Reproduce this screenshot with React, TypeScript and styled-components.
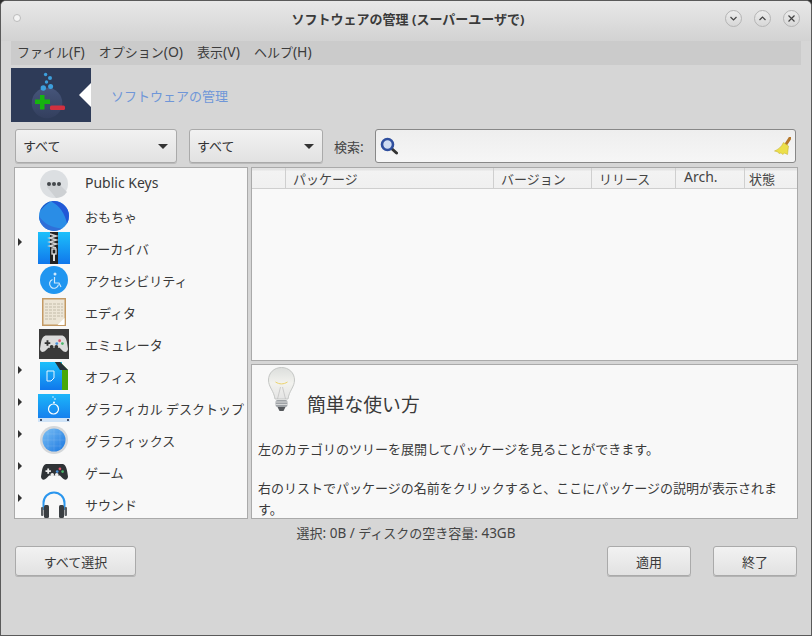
import * as React from 'react';
import styled, { createGlobalStyle } from 'styled-components';

const GlobalStyle = createGlobalStyle`
    html, body {
        margin: 0;
        padding: 0;
        background: #2e2e2e;
    }
    body {
        font-family: "Noto Sans", "Noto Sans CJK JP", sans-serif;
        font-size: 13px;
        color: #333;
    }
`;

// latin text runs a bit larger than the kana next to it
const Latin = styled.span`
    font-size: 14px;
`;

const StatusLatin = styled.span`
    font-size: 13.500px;
`;

const Window = styled.div`
    width: 812px;
    height: 636px;
    box-sizing: border-box;
    border: 1px solid #5a5a5a;
    border-radius: 6px 6px 0 0;
    background: #d6d6d6;
    display: flex;
    flex-direction: column;
    overflow: hidden;
`;

const TitleBar = styled.div`
    height: 40px;
    flex: none;
    display: flex;
    align-items: center;
    padding: 0 11px 6px 12px;
    box-sizing: border-box;
    background: linear-gradient(#e8e8e8, #d2d2d2);
`;

const Dot = styled.div`
    width: 6px;
    height: 6px;
    border-radius: 50%;
    background: #f4f4f4;
    border: 1px solid #bbb;
`;

const Title = styled.div`
    flex: 1;
    text-align: center;
    font-weight: 700;
    font-size: 13px;
    color: #3a3a3a;
    padding-left: 70px;
`;

const WinButtons = styled.div`
    display: flex;
    gap: 12px;
`;

const WinButton = styled.div`
    width: 17px;
    height: 17px;
    box-sizing: border-box;
    border-radius: 50%;
    border: 1px solid #b4b4b4;
    background: linear-gradient(#ececec, #d8d8d8);
    display: flex;
    align-items: center;
    justify-content: center;
`;

const MenuBar = styled.div`
    height: 24px;
    flex: none;
    margin: 0 10px;
    padding: 0 6px 3px;
    box-sizing: border-box;
    display: flex;
    align-items: center;
    gap: 14px;
    background: #cbcbcb;
    color: #3c3c3c;
`;

const Banner = styled.div`
    flex: none;
    height: 54px;
    margin: 3px 10px 0;
    display: flex;
    align-items: center;
    gap: 20px;
`;

const BannerLogo = styled.div`
    width: 80px;
    height: 54px;
    background: #2e3b58;
    position: relative;
`;

const BannerNotch = styled.div`
    position: absolute;
    right: 0;
    top: 15px;
    border-style: solid;
    border-width: 12px 12px 12px 0;
    border-color: transparent #fff transparent transparent;
`;

const BannerText = styled.div`
    color: #6f96d8;
`;

const FilterRow = styled.div`
    flex: none;
    height: 34px;
    margin: 7px 15px 0 14px;
    display: flex;
    align-items: center;
`;

const Select = styled.div<{ $width: number; $gap: number }>`
    width: ${p => p.$width}px;
    height: 34px;
    margin-right: ${p => p.$gap}px;
    box-sizing: border-box;
    padding: 0 7px 2px;
    display: flex;
    align-items: center;
    justify-content: space-between;
    border: 1px solid #aaa;
    border-radius: 3px;
    background: linear-gradient(#f2f2f2, #e2e2e2);
    box-shadow: 0 1px 0 #bbb;
`;

const Caret = styled.div`
    border-style: solid;
    border-width: 5px 5px 0 5px;
    border-color: #333 transparent transparent transparent;
    margin-right: 1px;
    margin-top: 2px;
`;

const SearchLabel = styled.div`
    width: 41px;
    flex: none;
    color: #444;
`;

const SearchBox = styled.div`
    flex: 1;
    height: 34px;
    box-sizing: border-box;
    padding: 0 4px;
    display: flex;
    align-items: center;
    justify-content: space-between;
    border: 1px solid #888;
    border-radius: 3px;
    background: linear-gradient(#eeeeee, #f6f6f6);
`;

const Panes = styled.div`
    flex: none;
    height: 352px;
    margin: 4px 13px 0 13px;
    display: flex;
    gap: 3px;
`;

const Tree = styled.div`
    width: 234px;
    flex: none;
    box-sizing: border-box;
    border: 1px solid #aaa;
    background: #f8f8f8;
    overflow: hidden;
`;

const TreeRow = styled.div`
    height: 32px;
    display: flex;
    align-items: center;
    color: #3a3a3a;
`;

const ArrowSlot = styled.div`
    width: 23px;
    flex: none;
    padding-left: 3px;
    box-sizing: border-box;
    height: 100%;
    display: flex;
    align-items: center;
`;

const Arrow = styled.div`
    border-style: solid;
    border-width: 4px 0 4px 4px;
    border-color: transparent transparent transparent #333;
    margin-bottom: 12px;
`;

const IconSlot = styled.div`
    width: 32px;
    height: 32px;
    flex: none;
    display: flex;
    align-items: center;
    justify-content: center;
`;

const TreeLabel = styled.div<{ $raised?: boolean }>`
    margin-left: 15px;
    margin-bottom: ${p => (p.$raised ? 4 : 0)}px;
    white-space: nowrap;
`;

const RightColumn = styled.div`
    flex: 1;
    display: flex;
    flex-direction: column;
    gap: 3px;
`;

const Table = styled.div`
    height: 194px;
    flex: none;
    box-sizing: border-box;
    border: 1px solid #aaa;
    background: #f9f9f9;
`;

const TableHead = styled.div`
    height: 21px;
    box-sizing: border-box;
    display: flex;
    border-bottom: 1px solid #cfcfcf;
    background: linear-gradient(#e4e4e4 0, #e4e4e4 2px, #f3f3f3 3px, #f0f0f0);
`;

const HeadCell = styled.div<{ $width: number; $pad?: number; $up?: boolean }>`
    width: ${p => p.$width}px;
    flex: none;
    box-sizing: border-box;
    padding: ${p => (p.$up ? 0 : 1)}px 0 0 ${p => p.$pad ?? 7}px;
    line-height: ${p => (p.$up ? 17 : 20)}px;
    border-right: 1px solid #cfcfcf;
    color: #444;
    white-space: nowrap;
    overflow: hidden;

    &:last-child {
        border-right: none;
    }
`;

const Details = styled.div`
    flex: 1;
    min-height: 0;
    box-sizing: border-box;
    border: 1px solid #aaa;
    background: #f8f8f8;
    padding: 2px 0 0 6px;
    overflow: hidden;
    color: #3a3a3a;
`;

const DetailsHead = styled.div`
    display: flex;
    height: 50px;
    margin-bottom: 22px;
    padding-left: 10px;
    gap: 12px;
`;

const DetailsTitle = styled.div`
    align-self: flex-end;
    font-size: 18.800px;
    line-height: 26px;
    margin-bottom: -1px;
`;

const Para = styled.p`
    margin: 0;
    font-size: 13px;
    line-height: 21px;
    width: 530px;

    & + & {
        margin-top: 18px;
    }
`;

const StatusLine = styled.div`
    flex: none;
    height: 27px;
    display: flex;
    align-items: center;
    justify-content: center;
    color: #444;
`;

const ButtonRow = styled.div`
    flex: none;
    height: 30px;
    margin: 0 14px;
    display: flex;
    align-items: center;
    gap: 22px;
`;

const Spacer = styled.div`
    flex: 1;
`;

const PushButton = styled.div<{ $width: number }>`
    width: ${p => p.$width}px;
    height: 30px;
    box-sizing: border-box;
    display: flex;
    align-items: center;
    justify-content: center;
    border: 1px solid #aaa;
    border-radius: 3px;
    background: linear-gradient(#f2f2f2, #e2e2e2);
    box-shadow: 0 1px 0 #b4b4b4;
    color: #3a3a3a;
`;

const AppLogo = () => (
    <svg width="80" height="54" viewBox="0 0 80 54">
        <defs>
            <linearGradient id="logoGlobe" x1="0" y1="0" x2="0" y2="1">
                <stop offset="0" stopColor="#46557a" />
                <stop offset="1" stopColor="#333f5e" />
            </linearGradient>
        </defs>
        <circle cx="36" cy="35" r="15.300" fill="url(#logoGlobe)" />
        <circle cx="34.600" cy="6.500" r="1.700" fill="#3d9fdc" />
        <circle cx="39" cy="10" r="2" fill="#3d9fdc" />
        <circle cx="35.500" cy="14" r="1.700" fill="#3d9fdc" />
        <circle cx="39.600" cy="18.500" r="2.500" fill="#3d9fdc" />
        <circle cx="32.300" cy="20" r="2.700" fill="#3d9fdc" />
        <path d="M29 27h4.500v4.500H39v4.500h-5.500v5.500H29V36h-5v-4.500h5z" fill="#16b40f" />
        <rect x="39" y="37.500" width="15" height="4.500" rx="1.500" fill="#d2303f" />
    </svg>
);

const KeysIcon = () => (
    <svg width="28" height="28" viewBox="0 0 28 28">
        <circle cx="14" cy="14" r="14" fill="#dcdfe2" />
        <path d="M7 17l4-5 10 4 6 6a14 14 0 0 1-11 6z" fill="#cdd0d3" />
        <circle cx="9" cy="14" r="2" fill="#44484c" />
        <circle cx="14" cy="14" r="2" fill="#44484c" />
        <circle cx="19" cy="14" r="2" fill="#44484c" />
    </svg>
);

const BallIcon = () => (
    <svg width="30" height="30" viewBox="0 0 30 30">
        <circle cx="15" cy="15" r="15" fill="#2a8de6" />
        <path d="M12 .300A15 15 0 0 1 30 15a15 15 0 0 1-2 7.500C26 13 21 5 12 .300Z" fill="#2258d6" />
        <path d="M1 10C4 4 8 1.500 12 .300C8 3 4 6 1 10Z" fill="#1c4fc4" />
        <path d="M0 15a15 15 0 0 0 15 15c3 0 6-1 8-2.500C13 27 4 22 0 15Z" fill="#2f6fd8" />
    </svg>
);

const ZipIcon = () => (
    <svg width="32" height="32" viewBox="0 0 32 32">
        <defs>
            <linearGradient id="zipBlue" x1="0" y1="0" x2="0" y2="1">
                <stop offset="0" stopColor="#1cc0fb" />
                <stop offset="1" stopColor="#1077ec" />
            </linearGradient>
        </defs>
        <rect width="32" height="32" fill="url(#zipBlue)" />
        <path d="M12 0h8v32h-8z" fill="#222" />
        <path d="M12 2l6 2-6 2 6 2-6 2 6 2-6 2 6 2" fill="none" stroke="#d0d0d0" strokeWidth="1.800" />
        <rect x="14" y="17" width="4" height="5" fill="none" stroke="#ddd" strokeWidth="1.300" />
        <rect x="15" y="22" width="2" height="7" fill="#ddd" />
    </svg>
);

const AccessIcon = () => (
    <svg width="28" height="28" viewBox="0 0 28 28">
        <circle cx="14" cy="14" r="14" fill="#2196f0" />
        <circle cx="15" cy="8" r="1.500" fill="#cfe8fc" />
        <path d="M14.500 11v6h4.500l2 4" fill="none" stroke="#cfe8fc" strokeWidth="1.200" />
        <path d="M12.500 13.500a4.500 4.500 0 1 0 6 5" fill="none" stroke="#cfe8fc" strokeWidth="1.200" />
    </svg>
);

const EditorIcon = () => (
    <svg width="24" height="28" viewBox="0 0 24 28">
        <rect x="0.750" y="0.750" width="22.500" height="26.500" fill="#ece5d6" stroke="#c49a64" strokeWidth="1.500" />
        <path d="M3 6h18M3 9h18M3 12h18M3 15h18M3 18h18M3 21h12" stroke="#cfc9b8" strokeWidth="1.400" strokeDasharray="3 1" />
        <path d="M22.500 20v7h-7z" fill="#fff" />
    </svg>
);

const PadShape = ({ fill, face, width, height }: { fill: string; face: string; width: number; height: number }) => (
    <svg width={width} height={height} viewBox="0 0 30 20">
        <path d="M7 1h16c3 0 5 2 6 8l1 6c0 3-3 5-6 2l-3-3H9l-3 3c-3 3-6 1-6-2l1-6C2 3 4 1 7 1Z" fill={fill} />
        <path d="M7 6h2v2h2v2H9v2H7v-2H5V8h2z" fill={face} />
        <circle cx="21" cy="6.500" r="1.500" fill="#e0566a" />
        <circle cx="24" cy="9.500" r="1.500" fill="#4ab56a" />
        <circle cx="18" cy="9.500" r="1.500" fill="#4a90d9" />
        <circle cx="12.500" cy="13" r="2" fill={face} />
        <circle cx="17.500" cy="13" r="2" fill={face} />
    </svg>
);

const EmulatorWrap = styled.div`
    width: 30px;
    height: 30px;
    background: #3a3a3a;
    display: flex;
    align-items: center;
    justify-content: center;
`;

const OfficeIcon = () => (
    <svg width="28" height="28" viewBox="0 0 28 28">
        <defs>
            <linearGradient id="officeBlue" x1="0" y1="0" x2="0" y2="1">
                <stop offset="0" stopColor="#1cc0fb" />
                <stop offset="1" stopColor="#1077ec" />
            </linearGradient>
        </defs>
        <rect width="22" height="28" fill="url(#officeBlue)" />
        <path d="M15 0h5l8 8v20h-6V8z" fill="#48a80a" />
        <path d="M15 0h5l8 8h-8z" fill="#26323a" />
        <path d="M7 9h7v7l-3 3H7z" fill="none" stroke="#e8f6ff" strokeWidth="1" />
    </svg>
);

const DesktopIcon = () => (
    <svg width="32" height="28" viewBox="0 0 32 28">
        <defs>
            <linearGradient id="deskBlue" x1="0" y1="0" x2="0" y2="1">
                <stop offset="0" stopColor="#1cb6fa" />
                <stop offset="1" stopColor="#1580ee" />
            </linearGradient>
        </defs>
        <rect width="32" height="24" fill="url(#deskBlue)" />
        <rect y="24" width="32" height="4" fill="#cfe3f7" />
        <circle cx="15.500" cy="15" r="5" fill="none" stroke="#fff" strokeWidth="1.200" />
        <circle cx="16" cy="8.500" r="1" fill="#fff" />
        <circle cx="17" cy="5" r="0.800" fill="#fff" />
        <circle cx="15" cy="3" r="0.700" fill="#fff" />
        <rect x="29" y="25" width="2" height="2" fill="#44506a" />
        <rect x="2" y="25" width="2" height="2" fill="#44506a" />
    </svg>
);

const GlobeIcon = () => (
    <svg width="28" height="28" viewBox="0 0 28 28">
        <defs>
            <linearGradient id="globeBlue" x1="0" y1="0" x2="1" y2="1">
                <stop offset="0" stopColor="#7cc0f4" />
                <stop offset="1" stopColor="#1976e0" />
            </linearGradient>
        </defs>
        <circle cx="14" cy="14" r="14" fill="#d4d7da" />
        <circle cx="14" cy="14" r="11.500" fill="url(#globeBlue)" />
        <path d="M6 8h16M3 14h22M6 20h16M8 5v18M14 3v22M20 5v18" stroke="#ffffff" strokeOpacity="0.180" strokeWidth="0.600" />
    </svg>
);

const HeadphonesIcon = () => (
    <svg width="26" height="28" viewBox="0 0 26 28">
        <path d="M2.500 20V13a10.500 10.500 0 0 1 21 0v7" fill="none" stroke="#2a96ee" strokeWidth="2" />
        <rect x="0" y="17" width="2.500" height="9" rx="1" fill="#5a5e62" />
        <rect x="3" y="15" width="5" height="13" rx="1.500" fill="#3a3e42" />
        <rect x="18" y="15" width="5" height="13" rx="1.500" fill="#3a3e42" />
        <rect x="23.500" y="17" width="2.500" height="9" rx="1" fill="#5a5e62" />
    </svg>
);

const SearchIcon = () => (
    <svg width="18" height="18" viewBox="0 0 18 18">
        <path d="M11 11l5.500 5" stroke="#333" strokeWidth="3" strokeLinecap="round" />
        <circle cx="7.500" cy="7.500" r="5.500" fill="#cfdcf2" stroke="#2f4f9e" strokeWidth="2.600" />
    </svg>
);

const BroomIcon = () => (
    <svg width="17" height="18" viewBox="0 0 17 18">
        <path d="M16 1l-4.500 7" stroke="#b5772a" strokeWidth="3" strokeLinecap="round" />
        <path d="M9.500 5.500l5 3.500-1 8.500-3-1.500-1.500 1.500-2-1.500-2 .5-1-1.500-3.500-1C4 12.500 7.500 10 9.500 5.500z" fill="#ecdf4a" stroke="#c2ae28" strokeWidth="0.500" />
    </svg>
);

const BulbIcon = () => (
    <svg width="27" height="45" viewBox="0 0 27 45">
        <defs>
            <linearGradient id="bulbGlass" x1="0" y1="0" x2="0" y2="1">
                <stop offset="0" stopColor="#dcdedc" />
                <stop offset="0.500" stopColor="#f2f2ee" />
                <stop offset="1" stopColor="#e4e4e4" />
            </linearGradient>
        </defs>
        <path d="M13.500 0.500C6 0.500 0.500 6 0.500 13c0 7 5.500 11 6.500 19h13c1-8 6.500-12 6.500-19C26.500 6 21 0.500 13.500 0.500Z" fill="url(#bulbGlass)" stroke="#c4c6c4" />
        <path d="M7.500 15c4 2.500 8 2.500 12 0" fill="none" stroke="#ecd36c" strokeWidth="1" />
        <path d="M9.500 32L12.500 20M17.500 32L14.500 20" stroke="#bdbdbd" strokeWidth="0.700" />
        <rect x="7.500" y="33" width="12" height="7" rx="2" fill="#9ea2a6" />
        <path d="M7.500 35h12M7.500 37.500h12" stroke="#e6e6e6" strokeWidth="0.800" />
        <path d="M9.500 40h8l-2 4h-4z" fill="#55585c" />
    </svg>
);

const categories: { label: React.ReactNode; raised?: boolean; icon: React.ReactNode; arrow: boolean }[] = [
    { label: <Latin>Public Keys</Latin>, raised: true, icon: <KeysIcon />, arrow: false },
    { label: 'おもちゃ', icon: <BallIcon />, arrow: false },
    { label: 'アーカイバ', icon: <ZipIcon />, arrow: true },
    { label: 'アクセシビリティ', icon: <AccessIcon />, arrow: false },
    { label: 'エディタ', icon: <EditorIcon />, arrow: false },
    {
        label: 'エミュレータ',
        icon: (
            <EmulatorWrap>
                <PadShape fill="#dcdcdc" face="#333" width={28} height={20} />
            </EmulatorWrap>
        ),
        arrow: false,
    },
    { label: 'オフィス', icon: <OfficeIcon />, arrow: true },
    { label: 'グラフィカル デスクトップ', icon: <DesktopIcon />, arrow: true },
    { label: 'グラフィックス', icon: <GlobeIcon />, arrow: true },
    { label: 'ゲーム', icon: <PadShape fill="#2f3336" face="#eee" width={27} height={18} />, arrow: true },
    { label: 'サウンド', icon: <HeadphonesIcon />, arrow: true },
];

const columns: { label: React.ReactNode; width: number; pad?: number; up?: boolean }[] = [
    { label: '', width: 34 },
    { label: 'パッケージ', width: 208 },
    { label: 'バージョン', width: 98 },
    { label: 'リリース', width: 84 },
    { label: <Latin>Arch.</Latin>, width: 69, pad: 8, up: true },
    { label: '状態', width: 52, pad: 4 },
];

export default function App() {
    return (
        <>
            <GlobalStyle />
            <Window>
                <TitleBar>
                    <Dot />
                    <Title>ソフトウェアの管理 (スーパーユーザで)</Title>
                    <WinButtons>
                        <WinButton>
                            <svg width="9" height="9" viewBox="0 0 9 9">
                                <path d="M1.500 3l3 3 3-3" fill="none" stroke="#444" strokeWidth="1.200" />
                            </svg>
                        </WinButton>
                        <WinButton>
                            <svg width="9" height="9" viewBox="0 0 9 9">
                                <path d="M1.500 6l3-3 3 3" fill="none" stroke="#444" strokeWidth="1.200" />
                            </svg>
                        </WinButton>
                        <WinButton>
                            <svg width="9" height="9" viewBox="0 0 9 9">
                                <path d="M1.500 1.500l6 6M7.500 1.500l-6 6" fill="none" stroke="#444" strokeWidth="1.200" />
                            </svg>
                        </WinButton>
                    </WinButtons>
                </TitleBar>
                <MenuBar>
                    <span>ファイル<Latin>(F)</Latin></span>
                    <span>オプション<Latin>(O)</Latin></span>
                    <span>表示<Latin>(V)</Latin></span>
                    <span>ヘルプ<Latin>(H)</Latin></span>
                </MenuBar>
                <Banner>
                    <BannerLogo>
                        <AppLogo />
                        <BannerNotch />
                    </BannerLogo>
                    <BannerText>ソフトウェアの管理</BannerText>
                </Banner>
                <FilterRow>
                    <Select $width={162} $gap={12}>
                        すべて
                        <Caret />
                    </Select>
                    <Select $width={134} $gap={11}>
                        すべて
                        <Caret />
                    </Select>
                    <SearchLabel>検索<Latin>:</Latin></SearchLabel>
                    <SearchBox>
                        <SearchIcon />
                        <BroomIcon />
                    </SearchBox>
                </FilterRow>
                <Panes>
                    <Tree>
                        {categories.map((c, i) => (
                            <TreeRow key={i}>
                                <ArrowSlot>{c.arrow && <Arrow />}</ArrowSlot>
                                <IconSlot>{c.icon}</IconSlot>
                                <TreeLabel $raised={c.raised}>{c.label}</TreeLabel>
                            </TreeRow>
                        ))}
                    </Tree>
                    <RightColumn>
                        <Table>
                            <TableHead>
                                {columns.map((c, i) => (
                                    <HeadCell key={i} $width={c.width} $pad={c.pad} $up={c.up}>
                                        {c.label}
                                    </HeadCell>
                                ))}
                            </TableHead>
                        </Table>
                        <Details>
                            <DetailsHead>
                                <BulbIcon />
                                <DetailsTitle>簡単な使い方</DetailsTitle>
                            </DetailsHead>
                            <Para>左のカテゴリのツリーを展開してパッケージを見ることができます。</Para>
                            <Para>右のリストでパッケージの名前をクリックすると、ここにパッケージの説明が表示されます。</Para>
                        </Details>
                    </RightColumn>
                </Panes>
                <StatusLine>
                    <span>選択<StatusLatin>: 0B / </StatusLatin>ディスクの空き容量<StatusLatin>: 43GB</StatusLatin></span>
                </StatusLine>
                <ButtonRow>
                    <PushButton $width={121}>すべて選択</PushButton>
                    <Spacer />
                    <PushButton $width={84}>適用</PushButton>
                    <PushButton $width={84}>終了</PushButton>
                </ButtonRow>
            </Window>
        </>
    );
}
